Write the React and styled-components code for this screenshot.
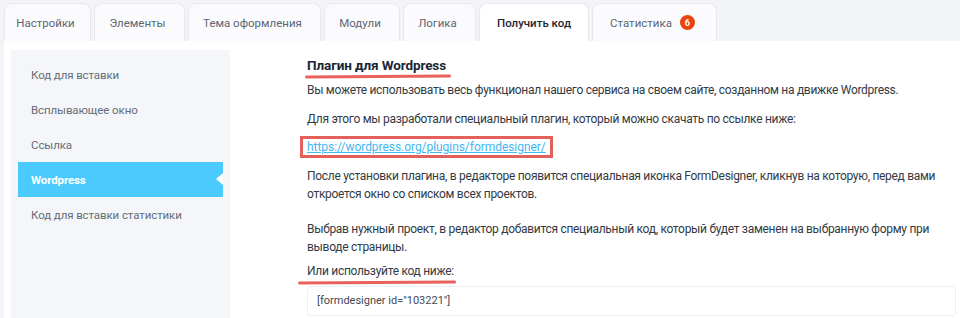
import React from 'react';
import styled, { createGlobalStyle } from 'styled-components';

const GlobalStyle = createGlobalStyle`
  body {
    margin: 0;
    background: #f3f4f8;
    font-family: Roboto, "Liberation Sans", Arial, sans-serif;
    color: #333a44;
  }
`;

const Page = styled.div`
  width: 960px;
  height: 318px;
  overflow: hidden;
  display: flex;
  flex-direction: column;
`;

const TabBar = styled.div`
  display: flex;
  align-items: flex-end;
  padding: 3px 0 0 4px;
  gap: 3px;
`;

const Tab = styled.div`
  box-sizing: border-box;
  width: ${(p) => p.$w}px;
  height: 38px;
  display: flex;
  align-items: center;
  justify-content: center;
  gap: 8px;
  border: 1px solid #e7e9ee;
  border-bottom: none;
  border-radius: 8px 8px 0 0;
  background: ${(p) => (p.$active ? '#ffffff' : '#fbfbfd')};
  color: ${(p) => (p.$active ? '#1f2630' : '#5d6672')};
  font-size: 11.5px;
  font-weight: ${(p) => (p.$active ? 500 : 400)};
  padding-right: ${(p) => (p.$active ? 0 : 4)}px;
`;

const Badge = styled.span`
  width: 15px;
  height: 15px;
  border-radius: 50%;
  background: #e8440c;
  color: #fff;
  font-size: 9px;
  font-weight: 700;
  display: flex;
  align-items: center;
  justify-content: center;
`;

const Panel = styled.div`
  flex: 1;
  margin-left: 4px;
  background: #fff;
  display: flex;
  padding: 9px 4px 0 7px;
`;

const Sidebar = styled.div`
  width: 219px;
  flex-shrink: 0;
  background: #f5f6fa;
  padding-top: 7px;
`;

const SideItem = styled.div`
  position: relative;
  height: 35px;
  margin: 0 7px;
  padding-left: 13px;
  display: flex;
  align-items: center;
  font-size: 11.5px;
  letter-spacing: -0.1px;
  color: ${(p) => (p.$active ? '#fff' : '#666c76')};
  font-weight: ${(p) => (p.$active ? 700 : 400)};
  background: ${(p) => (p.$active ? '#4bcbfd' : 'transparent')};

  ${(p) =>
    p.$active &&
    `
    &::after {
      content: '';
      position: absolute;
      right: 0;
      top: 11px;
      border-top: 6px solid transparent;
      border-bottom: 6px solid transparent;
      border-right: 7px solid #ffffff;
    }
  `}
`;

const Content = styled.div`
  flex: 1;
  padding-left: 77px;
  font-size: 12px;
  letter-spacing: -0.3px;
  line-height: 18px;
`;

const Marked = styled.span`
  position: relative;
  display: inline-block;

  &::after {
    content: '';
    position: absolute;
    left: ${(p) => p.$left}px;
    right: ${(p) => p.$right}px;
    bottom: -4px;
    height: 3px;
    border-radius: 2px;
    background: #e8625b;
    transform: rotate(-0.4deg);
  }
`;

const Heading = styled.div`
  margin-top: 6px;
  font-size: 13.5px;
  letter-spacing: -0.1px;
  font-weight: 700;
  color: #1a2535;
`;

const Text = styled.p`
  margin: ${(p) => p.$top}px 0 0;
`;

const LinkBox = styled.div`
  display: inline-block;
  margin: 8px 0 0 -7px;
  padding: 0 4px;
  border: 3px solid #e4605b;
  line-height: 16px;
`;

const Link = styled.a`
  color: #44b6f0;
  letter-spacing: -0.05px;
  text-decoration: underline;
`;

const Subhead = styled.div`
  margin-top: 6px;
  color: #333a44;
`;

const CodeBox = styled.div`
  margin-top: 6px;
  height: 30px;
  box-sizing: border-box;
  border: 1px solid #edf0f4;
  border-radius: 3px;
  padding-left: 9px;
  display: flex;
  align-items: center;
  font-size: 11px;
  letter-spacing: 0;
  color: #444a52;
`;

const tabs = [
  { label: 'Настройки', w: 87 },
  { label: 'Элементы', w: 91 },
  { label: 'Тема оформления', w: 133 },
  { label: 'Модули', w: 76 },
  { label: 'Логика', w: 73 },
  { label: 'Получить код', w: 110, active: true },
  { label: 'Статистика', w: 125, badge: 6 },
];

const items = [
  'Код для вставки',
  'Всплывающее окно',
  'Ссылка',
  'Wordpress',
  'Код для вставки статистики',
];

export default function App() {
  return (
    <Page>
      <GlobalStyle />
      <TabBar>
        {tabs.map((t) => (
          <Tab key={t.label} $w={t.w} $active={t.active}>
            {t.label}
            {t.badge && <Badge>{t.badge}</Badge>}
          </Tab>
        ))}
      </TabBar>
      <Panel>
        <Sidebar>
          {items.map((it) => (
            <SideItem key={it} $active={it === 'Wordpress'}>
              {it}
            </SideItem>
          ))}
        </Sidebar>
        <Content>
          <Heading>
            <Marked $left={-2} $right={-5}>Плагин для Wordpress</Marked>
          </Heading>
          <Text $top={7}>
            Вы можете использовать весь функционал нашего сервиса на своем сайте, созданном на движке Wordpress.
          </Text>
          <Text $top={11}>
            Для этого мы разработали специальный плагин, который можно скачать по ссылке ниже:
          </Text>
          <LinkBox>
            <Link href="https://wordpress.org/plugins/formdesigner/">
              https://wordpress.org/plugins/formdesigner/
            </Link>
          </LinkBox>
          <Text $top={9}>
            После установки плагина, в редакторе появится специальная иконка FormDesigner, кликнув на которую, перед вами
            откроется окно со списком всех проектов.
          </Text>
          <Text $top={17}>
            Выбрав нужный проект, в редактор добавится специальный код, который будет заменен на выбранную форму при
            выводе страницы.
          </Text>
          <Subhead>
            <Marked $left={-9} $right={-2}>Или используйте код ниже:</Marked>
          </Subhead>
          <CodeBox>[formdesigner id="103221"]</CodeBox>
        </Content>
      </Panel>
    </Page>
  );
}
